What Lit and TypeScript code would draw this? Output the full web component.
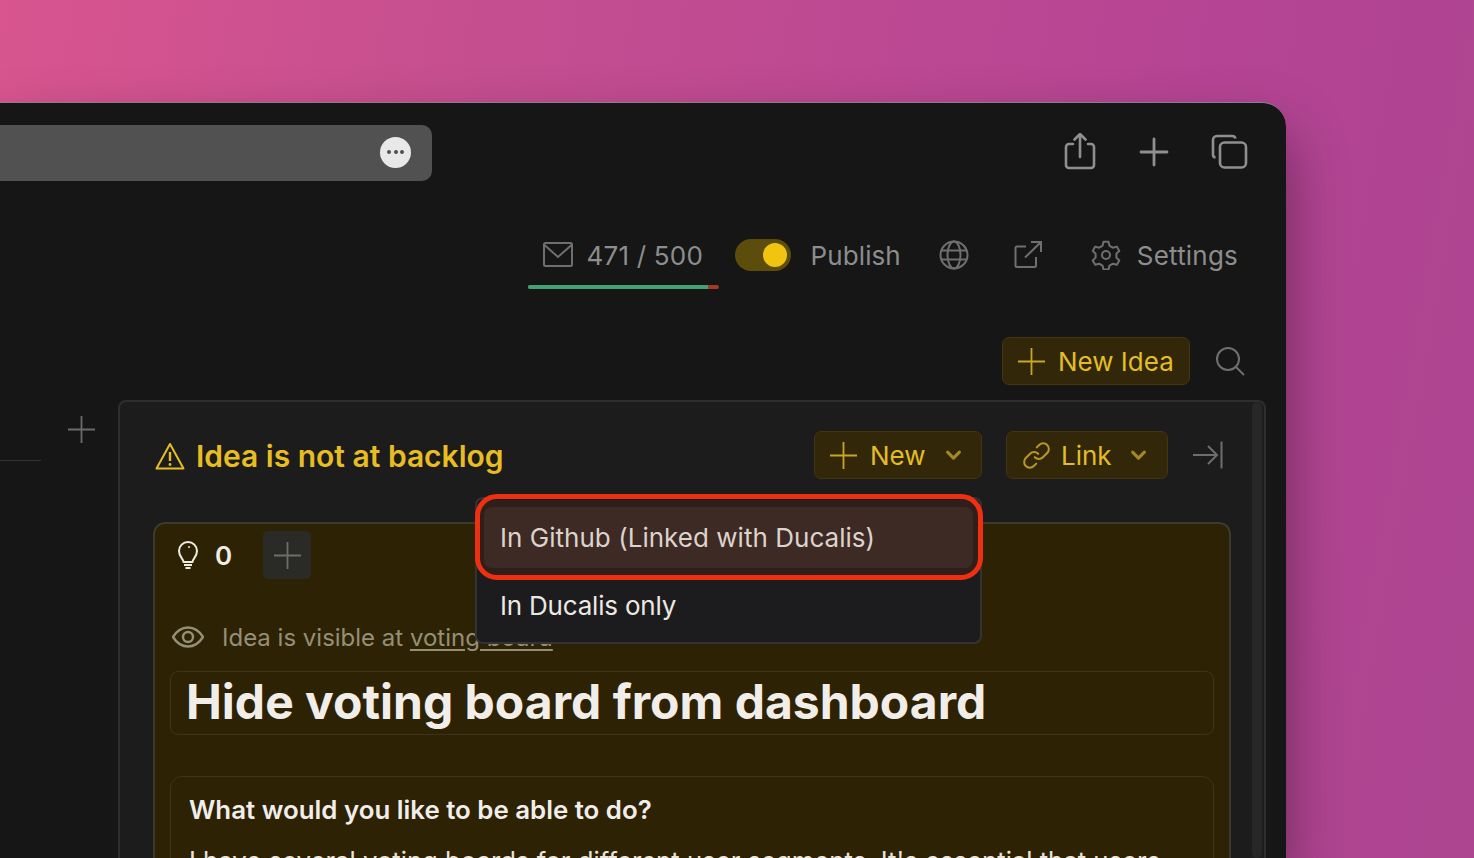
import { LitElement, html, css, svg } from "lit";
import { customElement } from "lit/decorators.js";

const icon = (size: number, body: unknown, vb = 24) => html`
  <svg class="ico" width=${size} height=${size} viewBox="0 0 ${vb} ${vb}" fill="none" stroke="currentColor">${body}</svg>
`;

const plus = svg`<path d="M12 0v24M0 12h24" stroke-width="1.6" />`;
const chevron = svg`<path d="M2 4l4.5 4.5L11 4" stroke-width="2.4" stroke-linecap="round" stroke-linejoin="round" />`;

@customElement("app-root")
export class AppRoot extends LitElement {
  static styles = css`
    :host {
      display: block;
      width: 1474px;
      height: 858px;
      overflow: hidden;
      background: linear-gradient(100deg, #d8558f 0%, #c44e90 32%, #b54494 75%, #ad4591 100%);
      font-family: Inter, "Liberation Sans", sans-serif;
      padding-top: 102px;
      box-sizing: border-box;
    }
    .ico {
      display: block;
      flex: none;
    }
    .window {
      width: 1286px;
      height: 756px;
      box-sizing: border-box;
      background: #161616;
      border-top: 1px solid #8e7b8c;
      border-top-right-radius: 24px;
      box-shadow: 0 30px 60px rgba(0, 0, 0, 0.4);
      display: flex;
      flex-direction: column;
      overflow: hidden;
    }
    .browser-bar {
      display: flex;
      align-items: center;
      justify-content: space-between;
      padding: 22px 37px 0 0;
      height: 56px;
      flex: none;
    }
    .url {
      width: 432px;
      height: 56px;
      background: #515151;
      border-radius: 0 10px 10px 0;
      display: flex;
      align-items: center;
      justify-content: flex-end;
      padding: 0 21px 2px 0;
      box-sizing: border-box;
    }
    .more {
      width: 31px;
      height: 31px;
      border-radius: 50%;
      background: #e8e8e8;
      display: flex;
      align-items: center;
      justify-content: center;
      gap: 2.5px;
    }
    .more i {
      width: 4px;
      height: 4px;
      border-radius: 50%;
      background: #515151;
    }
    .browser-actions {
      display: flex;
      align-items: center;
      gap: 42px;
      padding-bottom: 2px;
      color: #8f8f8f;
    }
    .share {
      margin-right: -2px;
    }
    .toolbar {
      display: flex;
      align-items: center;
      justify-content: flex-end;
      height: 64px;
      margin-top: 42px;
      padding-right: 48px;
      flex: none;
      color: #8d8d8d;
      font-size: 26px;
      letter-spacing: 0.2px;
    }
    .quota {
      position: relative;
      width: 191px;
      height: 64px;
      display: flex;
      align-items: center;
      gap: 13px;
      padding-left: 14px;
      box-sizing: border-box;
      margin-right: 16px;
    }
    .quota .ico {
      color: #6f6f6f;
    }
    .meter {
      position: absolute;
      left: 0;
      right: 0;
      bottom: -2px;
      height: 4px;
      border-radius: 2px;
      background: #a33a22;
      overflow: hidden;
    }
    .meter i {
      display: block;
      height: 100%;
      background: #43a274;
    }
    .toggle {
      width: 56px;
      height: 32px;
      border-radius: 16px;
      background: #5d4d0d;
      display: flex;
      align-items: center;
      justify-content: flex-end;
      padding-right: 4px;
      box-sizing: border-box;
      margin-right: 20px;
    }
    .toggle i {
      width: 24px;
      height: 24px;
      border-radius: 50%;
      background: #f1c40f;
    }
    .pub {
      margin-right: 38px;
      letter-spacing: 0.1px;
    }
    .globe {
      margin-right: 45px;
      color: #6f6f6f;
    }
    .ext {
      margin-right: 47px;
      color: #6f6f6f;
    }
    .gear {
      margin-right: 16px;
      color: #6f6f6f;
    }
    .actions {
      display: flex;
      align-items: center;
      justify-content: flex-end;
      height: 48px;
      margin-top: 50px;
      padding-right: 41px;
      gap: 25px;
      flex: none;
    }
    .search {
      color: #6f6f6f;
    }
    .btn {
      display: flex;
      align-items: center;
      height: 48px;
      box-sizing: border-box;
      background: #322708;
      border: 1.5px solid #43350f;
      border-radius: 7px;
      color: #e3bd27;
      font-size: 26px;
    }
    .btn .ico {
      color: #c9a62a;
    }
    .btn .chev .ico {
      color: #a38827;
    }
    .btn-new-idea {
      width: 188px;
      padding-left: 15px;
      gap: 13px;
    }
    .lower {
      display: flex;
      margin-top: 15px;
      flex: 1;
      min-height: 0;
    }
    .side {
      width: 118px;
      flex: none;
      box-sizing: border-box;
      color: #6b6b6b;
    }
    .side-add {
      display: flex;
      justify-content: flex-end;
      padding: 16px 23px 0 0;
    }
    .side-rule {
      width: 41px;
      height: 1px;
      margin-top: 17px;
      background: #333;
    }
    .panel {
      position: relative;
      width: 1148px;
      box-sizing: border-box;
      background: #1c1c1d;
      border: 2px solid #2e2e2e;
      border-bottom: 0;
      border-radius: 8px 8px 0 0;
      padding: 28px 34px 0 33px;
    }
    .scroll {
      position: absolute;
      top: 0;
      bottom: 0;
      right: 2px;
      width: 10px;
      border-radius: 5px;
      background: #272727;
    }
    .panel-head {
      display: flex;
      align-items: center;
      height: 50px;
      padding: 0 9px 0 2px;
    }
    .warn {
      display: flex;
      align-items: center;
      gap: 11px;
      padding-top: 2px;
      color: #e7bd22;
      font-size: 30px;
      font-weight: 600;
      flex: 1;
    }
    .btn-new {
      width: 168px;
      padding-left: 15px;
      gap: 13px;
    }
    .btn-link {
      width: 162px;
      margin-left: 24px;
      padding-left: 16px;
      gap: 11px;
    }
    .btn-link > .ico {
      color: #b8982a;
    }
    .chev {
      margin-left: 6px;
    }
    .btn-link .chev {
      margin-left: 7px;
    }
    .collapse {
      margin: 0 -2px 0 25px;
      color: #6e6e6e;
    }
    .card {
      margin-top: 42px;
      width: 1078px;
      height: 400px;
      box-sizing: border-box;
      background: #2d2203;
      border: 2px solid #3b3a30;
      border-bottom: 0;
      border-radius: 12px 12px 0 0;
      padding: 7px 15px 0 15px;
    }
    .votes {
      display: flex;
      align-items: center;
      height: 48px;
      color: #f0ece4;
      font-size: 26px;
      font-weight: 600;
    }
    .votes .bulb {
      margin-left: 3px;
      margin-right: 12px;
    }
    .vote-add {
      width: 48px;
      height: 48px;
      margin-left: 31px;
      border-radius: 5px;
      background: #2a2a27;
      color: #6d6d6b;
      display: flex;
      align-items: center;
      justify-content: center;
    }
    .visible {
      display: flex;
      align-items: center;
      gap: 18px;
      margin-top: 38px;
      padding-left: 2px;
      height: 40px;
      color: #958f78;
      font-size: 24px;
    }
    .visible u {
      text-underline-offset: 3px;
    }
    .title {
      margin-top: 14px;
      height: 64px;
      box-sizing: border-box;
      border: 1.5px solid #3f3418;
      border-radius: 8px;
      padding: 0 0 3px 15px;
      display: flex;
      align-items: center;
      color: #f1eeea;
      font-size: 48px;
      font-weight: 700;
      white-space: nowrap;
    }
    .body {
      margin-top: 41px;
      height: 200px;
      box-sizing: border-box;
      border: 1.5px solid #3f3418;
      border-radius: 12px;
      padding: 17px 18px 0;
      color: #f1eeea;
      white-space: nowrap;
      overflow: hidden;
    }
    .body h3 {
      margin: 0;
      font-size: 25.85px;
      line-height: 32px;
      font-weight: 600;
    }
    .body p {
      margin: 19px 0 0;
      font-size: 25.7px;
      line-height: 32px;
      color: #e8e4dc;
    }
    .menu {
      position: absolute;
      left: 355px;
      top: 95px;
      width: 507px;
      height: 147px;
      box-sizing: border-box;
      background: #1c1c1e;
      border: 2px solid #333335;
      border-radius: 8px;
      padding: 8px 7px;
      color: #ece8e2;
      font-size: 26px;
      z-index: 2;
    }
    .menu div {
      height: 61px;
      display: flex;
      align-items: center;
      padding-left: 16px;
      border-radius: 8px;
      letter-spacing: -0.2px;
    }
    .menu .hot {
      background: #3e2a24;
      color: #dcd3cc;
      margin-bottom: 7px;
      letter-spacing: 0.03px;
      box-shadow: 0 0 0 7px #2f1e19;
    }
    .callout {
      position: absolute;
      left: 355px;
      top: 92px;
      width: 508px;
      height: 86px;
      box-sizing: border-box;
      border: 5px solid #ee2f10;
      border-radius: 22px;
      z-index: 3;
    }
  `;

  render() {
    return html`
      <div class="window">
        <div class="browser-bar">
          <div class="url">
            <div class="more"><i></i><i></i><i></i></div>
          </div>
          <div class="browser-actions">
            <span class="share">
              ${icon(38, svg`<path d="M12 11H8a3 3 0 0 0-3 3v18a3 3 0 0 0 3 3h22a3 3 0 0 0 3-3V14a3 3 0 0 0-3-3h-3M19 24V1M13.500 6.500L19 1l5.500 5.500" stroke-width="2.600" stroke-linecap="round" stroke-linejoin="round" />`, 38)}
            </span>
            ${icon(30, svg`<path d="M15 2v26M2 15h26" stroke-width="2.800" stroke-linecap="round" />`, 30)}
            ${icon(38, svg`<path d="M4.500 24.500A3 3 0 0 1 2 22V7a4 4 0 0 1 4-4h15a3.500 3.500 0 0 1 3.500 2.500" stroke-width="2.600" /><rect x="9" y="9.500" width="26" height="25" rx="4.500" stroke-width="2.600" />`, 38)}
          </div>
        </div>
        <div class="toolbar">
          <div class="quota">
            ${icon(32, svg`<rect x="2" y="4" width="28" height="23" rx="1.500" stroke-width="2" /><path d="M2.500 6l13.500 12L29.500 6" stroke-width="2" />`, 32)}
            <span>471 / 500</span>
            <div class="meter"><i style="width:${(180 / 191) * 100}%"></i></div>
          </div>
          <div class="toggle"><i></i></div>
          <span class="pub">Publish</span>
          <span class="globe">
            ${icon(30, svg`<circle cx="15" cy="15" r="13.500" stroke-width="2" /><ellipse cx="15" cy="15" rx="6.500" ry="13.500" stroke-width="2" /><path d="M2.500 10.500h25M2.500 19.500h25" stroke-width="2" />`, 30)}
          </span>
          <span class="ext">
            ${icon(30, svg`<path d="M12 6.500H3A1.500 1.500 0 0 0 1.500 8v17.500A1.500 1.500 0 0 0 3 27h17.500a1.500 1.500 0 0 0 1.500-1.500V17M11 17.500L27 2M17 2h10v10" stroke-width="2" />`, 30)}
          </span>
          <span class="gear">
            ${icon(30, svg`<path d="M12.500 1.800h5l1 4 3.400 1.900 3.900-1.100 2.500 4.300-2.900 2.900v3.800l2.900 2.900-2.500 4.300-3.900-1.100-3.400 1.900-1 4h-5l-1-4-3.400-1.900-3.900 1.100-2.500-4.300 2.900-2.900v-3.800L1.700 10.900l2.500-4.300 3.900 1.100 3.400-1.900z" stroke-width="2" stroke-linejoin="round" /><circle cx="15" cy="15" r="4" stroke-width="2" />`, 30)}
          </span>
          <span>Settings</span>
        </div>
        <div class="actions">
          <div class="btn btn-new-idea">${icon(27, plus)}<span>New Idea</span></div>
          <span class="search">
            ${icon(30, svg`<circle cx="13" cy="13" r="11" stroke-width="2" /><path d="M21 21l8 8" stroke-width="2" />`, 30)}
          </span>
        </div>
        <div class="lower">
          <div class="side">
            <div class="side-add">${icon(27, plus)}</div>
            <div class="side-rule"></div>
          </div>
          <div class="panel">
            <div class="scroll"></div>
            <div class="panel-head">
              <div class="warn">
                ${icon(30, svg`<path d="M15 3L1.500 27.500h27z" stroke-width="2" stroke-linejoin="round" /><path d="M15 11v9" stroke-width="2.400" /><circle cx="15" cy="23.500" r="1.400" fill="currentColor" stroke="none" />`, 30)}
                <span>Idea is not at backlog</span>
              </div>
              <div class="btn btn-new">
                ${icon(27, plus)}<span>New</span>
                <span class="chev">${icon(17, chevron, 13)}</span>
              </div>
              <div class="btn btn-link">
                ${icon(27, svg`<path d="M10.500 13.500a5 5 0 0 0 7.200 0l3.800-3.800a5 5 0 0 0-7.100-7.100L12.200 4.800M13.500 10.500a5 5 0 0 0-7.200 0l-3.800 3.800a5 5 0 0 0 7.100 7.100l2.200-2.200" stroke-width="1.800" stroke-linecap="round" />`)}
                <span>Link</span>
                <span class="chev">${icon(17, chevron, 13)}</span>
              </div>
              <span class="collapse">
                ${icon(30, svg`<path d="M0 15h24M15 6l9 9-9 9" stroke-width="2" /><path d="M28.500 1.500v27" stroke-width="2" />`, 30)}
              </span>
            </div>
            <div class="card">
              <div class="votes">
                <span class="bulb">
                  ${icon(30, svg`<path d="M10.500 22c0-3-4.500-5-4.500-11a9 9 0 0 1 18 0c0 6-4.500 8-4.500 11z" stroke-width="2" stroke-linejoin="round" /><path d="M11 25h8M12.500 28h5" stroke-width="2" /><circle cx="16" cy="7" r="1" fill="currentColor" stroke="none" />`, 30)}
                </span>
                <span>0</span>
                <div class="vote-add">${icon(27, plus)}</div>
              </div>
              <div class="visible">
                ${icon(32, svg`<path d="M1 16C5 9.500 10 6.500 16 6.500S27 9.500 31 16c-4 6.500-9 9.500-15 9.500S5 22.500 1 16z" stroke-width="2.400" /><circle cx="16" cy="16" r="5" stroke-width="2.400" />`, 32)}
                <span>Idea is visible at <u>voting board</u></span>
              </div>
              <div class="title">Hide voting board from dashboard</div>
              <div class="body">
                <h3>What would you like to be able to do?</h3>
                <p>I have several voting boards for different user segments. It's essential that users</p>
              </div>
            </div>
            <div class="menu">
              <div class="hot">In Github (Linked with Ducalis)</div>
              <div>In Ducalis only</div>
            </div>
            <div class="callout"></div>
          </div>
        </div>
      </div>
    `;
  }
}

declare global {
  interface HTMLElementTagNameMap {
    "app-root": AppRoot;
  }
}
